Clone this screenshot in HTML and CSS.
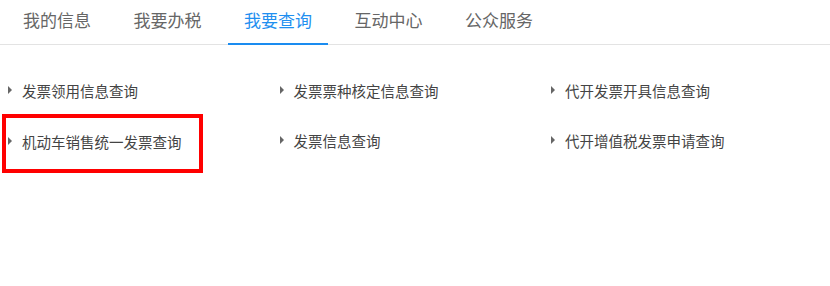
FILE: index.html
```html
<!DOCTYPE html>
<html lang="zh-CN">
<head>
  <meta charset="UTF-8">
  <title>我要查询</title>
  <link rel="stylesheet" href="styles.css">
</head>
<body>
  <ul class="tabs">
    <li><a href="#">我的信息</a></li>
    <li><a href="#">我要办税</a></li>
    <li class="active"><a href="#">我要查询</a></li>
    <li><a href="#">互动中心</a></li>
    <li><a href="#">公众服务</a></li>
  </ul>
  <ul class="menu">
    <li><a href="#">发票领用信息查询</a></li>
    <li><a href="#">发票票种核定信息查询</a></li>
    <li><a href="#">代开发票开具信息查询</a></li>
    <li class="marked"><a href="#">机动车销售统一发票查询</a></li>
    <li><a href="#">发票信息查询</a></li>
    <li><a href="#">代开增值税发票申请查询</a></li>
  </ul>
</body>
</html>
```

FILE: styles.css
```css
body {
  margin: 0;
  min-height: 286px;
  background: #fff;
  font-family: "Noto Sans CJK SC", "Liberation Sans", sans-serif;
}
ul {
  list-style: none;
  margin: 0;
  padding: 0;
}
a {
  text-decoration: none;
}
.tabs {
  display: flex;
  gap: 10.5px;
  padding-left: 7px;
  height: 44px;
  border-bottom: 1px solid #e3e3e3;
}
.tabs li {
  width: 100px;
  text-align: center;
}
.tabs a {
  display: block;
  height: 43px;
  line-height: 40px;
  font-size: 17px;
  color: #666;
  box-sizing: border-box;
}
.tabs .active a {
  color: #1f8ff0;
  border-bottom: 2px solid #1a8cf0;
  height: 45px;
}
.menu {
  display: grid;
  grid-template-columns: repeat(3, 271.5px);
  grid-auto-rows: 50px;
  padding: 20px 0 30px 2px;
}
.menu li {
  display: flex;
  align-items: center;
  height: 50px;
  box-sizing: border-box;
  padding-left: 6px;
}
.menu li::before {
  content: "";
  width: 0;
  height: 0;
  border-top: 4px solid transparent;
  border-bottom: 4px solid transparent;
  border-left: 4px solid #666;
  margin-right: 10px;
}
.menu a {
  font-size: 14.5px;
  color: #444;
}
.menu .marked {
  align-self: start;
  width: 201px;
  height: 59px;
  margin-top: -1px;
  padding: 0 0 5px 2px;
  border: 4px solid #ff0000;
}
```
